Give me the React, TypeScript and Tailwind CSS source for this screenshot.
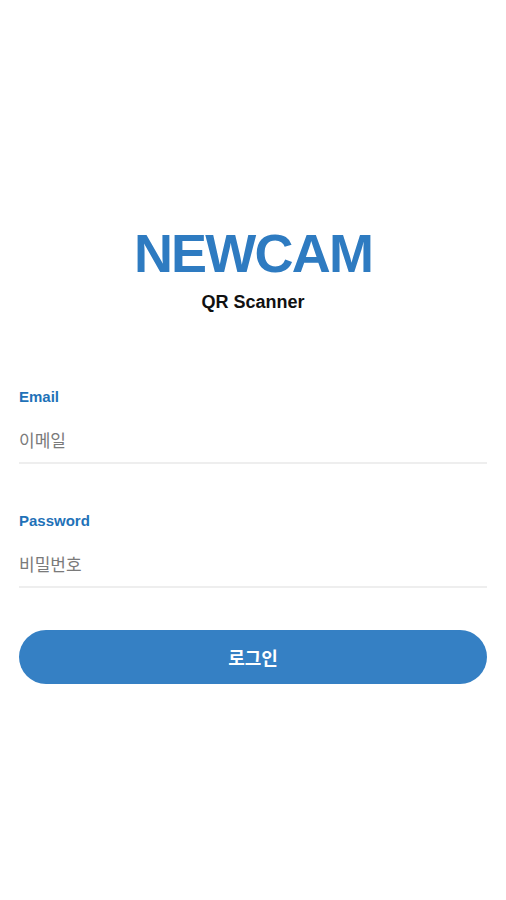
export default function App() {
  const fields = [
    { label: 'Email', placeholder: '이메일', type: 'email' },
    { label: 'Password', placeholder: '비밀번호', type: 'password' },
  ]

  return (
    <div className="min-h-[900px] w-full bg-white font-['Liberation_Sans','Noto_Sans_CJK_KR',sans-serif]">
      <div className="flex flex-col items-center pt-[226px]">
        <h1 className="h-[54px] text-[54px] font-bold leading-none tracking-[-1.8px] text-[#2e7bc1]">
          NEWCAM
        </h1>
        <p className="mt-[13px] text-[18px] font-bold leading-none text-[#111]">QR Scanner</p>
      </div>

      <form className="mt-[78px] px-[19px]" onSubmit={(e) => e.preventDefault()}>
        {fields.map((f, i) => (
          <div key={f.label} className={i === 0 ? '' : 'mt-[49px]'}>
            <label className="block text-[15px] font-bold leading-none text-[#1f72b8]">{f.label}</label>
            <div className="mt-[17px] border-b-2 border-[#eeeeee] pb-[5px]">
              <input
                type={f.type}
                placeholder={f.placeholder}
                className="block h-[36px] w-full bg-transparent p-0 font-['Noto_Sans_CJK_KR',sans-serif] text-[17px] text-[#333] outline-none placeholder:text-[#7a7a7a]"
              />
            </div>
          </div>
        ))}

        <button
          type="submit"
          className="mt-[42px] flex h-[54px] w-full items-center justify-center rounded-full bg-[#3580c4] font-['Noto_Sans_CJK_KR',sans-serif] text-[18px] font-bold text-white"
        >
          로그인
        </button>
      </form>
    </div>
  )
}
